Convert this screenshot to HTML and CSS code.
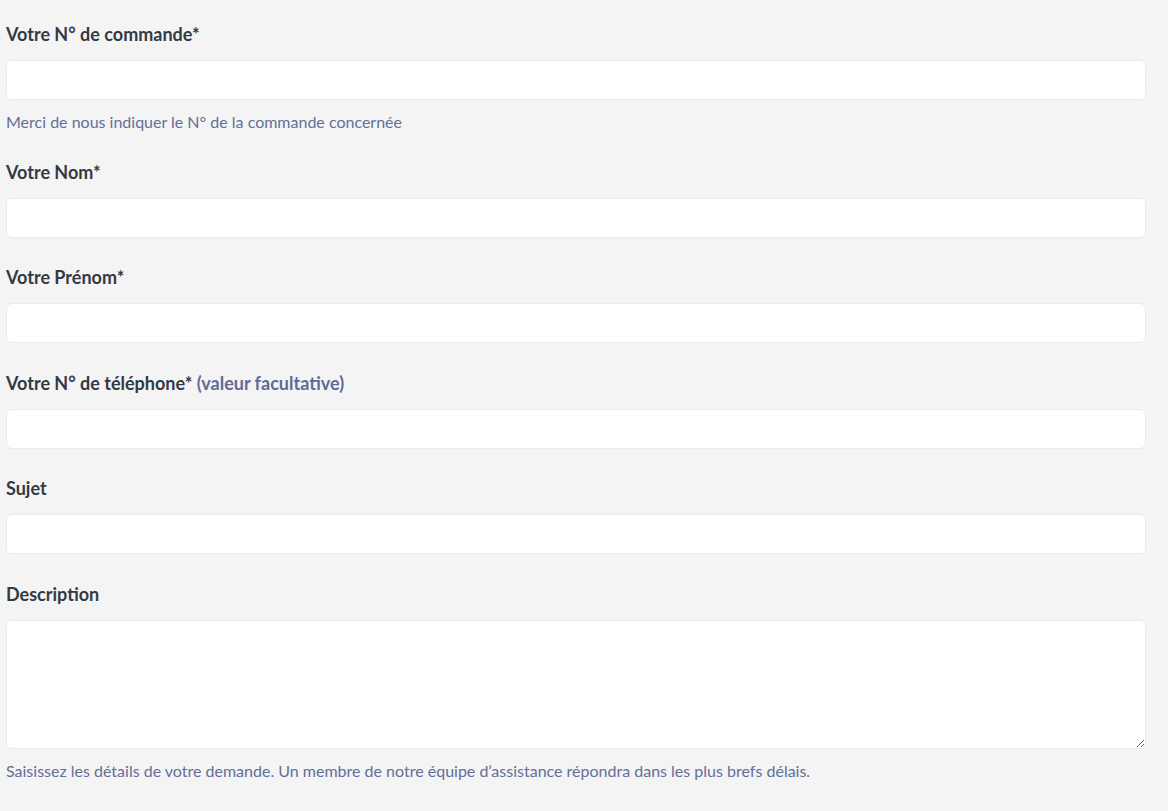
FILE: index.html
```html
<!DOCTYPE html>
<html lang="fr">
<head>
<meta charset="UTF-8"/>
<title>Soumettre une demande</title>
<link rel="stylesheet" href="styles.css">
</head>
<body>
<form class="request-form">
  <div class="field">
    <label for="order">Votre N° de commande*</label>
    <input type="text" id="order" class="input"/>
    <p class="hint">Merci de nous indiquer le N° de la commande concernée</p>
  </div>
  <div class="field">
    <label for="lastname">Votre Nom*</label>
    <input type="text" id="lastname" class="input"/>
  </div>
  <div class="field">
    <label for="firstname">Votre Prénom*</label>
    <input type="text" id="firstname" class="input"/>
  </div>
  <div class="field">
    <label for="phone">Votre N° de téléphone* <span class="optional">(valeur facultative)</span></label>
    <input type="text" id="phone" class="input"/>
  </div>
  <div class="field">
    <label for="subject">Sujet</label>
    <input type="text" id="subject" class="input"/>
  </div>
  <div class="field">
    <label for="description">Description</label>
    <textarea id="description" class="input textarea"></textarea>
    <p class="hint">Saisissez les détails de votre demande. Un membre de notre équipe d’assistance répondra dans les plus brefs délais.</p>
  </div>
</form>
</body>
</html>
```

FILE: styles.css
```css
*{margin:0;padding:0;box-sizing:border-box;}
html,body{height:100%;}
body{background:#f4f4f4; font-family:Lato,"Open Sans",sans-serif; color:#2f3941;}

.request-form{padding:22px 22px 0 6px; display:flex; flex-direction:column; gap:27.6px;}
.field{display:flex; flex-direction:column;}
.field label{font-size:18px; font-weight:700; line-height:24px; margin-bottom:14px; color:#333a44;}
.field .optional{color:#5f6b96;}

.input{width:100%; height:40px; background:#fff; border:1px solid #ebebeb; border-radius:6px; font-family:inherit; font-size:15px; padding:0 10px; outline:none;}
.textarea{height:129px; padding:8px 10px; resize:vertical;}

.hint{margin-top:12px; font-size:16px; line-height:20px; color:#636f98;}
```
